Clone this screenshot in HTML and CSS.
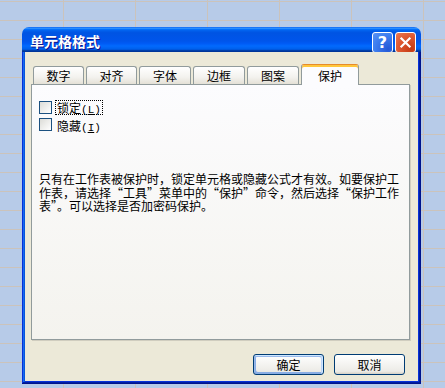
FILE: index.html
```html
<!DOCTYPE html>
<html lang="zh-CN">

<head>
    <meta charset="UTF-8">
    <title>单元格格式</title>
    <link rel="stylesheet" href="styles.css">
</head>

<body>
    <!-- Format Cells dialog -->
    <div class="dialog">
        <div class="titlebar">
            <span class="title">单元格格式</span>
            <div class="caption-buttons">
                <button class="cap help">?</button>
                <button class="cap close">
                    <svg viewBox="0 0 21 21" width="21" height="21">
                        <path d="M6 6 L15 15 M15 6 L6 15" stroke="#fff" stroke-width="2.4" stroke-linecap="square" />
                    </svg>
                </button>
            </div>
        </div>

        <div class="frame">
            <div class="body">
                <!-- Tab strip -->
                <div class="tabs">
                    <div class="tab">数字</div>
                    <div class="tab">对齐</div>
                    <div class="tab wide">字体</div>
                    <div class="tab wide">边框</div>
                    <div class="tab wide">图案</div>
                    <div class="tab selected">保护</div>
                </div>

                <!-- Protection page -->
                <div class="panel">
                    <div class="options">
                        <label class="option">
                            <span class="box"></span>
                            <span class="text focused">锁定<span class="key">(<u>L</u>)</span></span>
                        </label>
                        <label class="option">
                            <span class="box"></span>
                            <span class="text">隐藏<span class="key">(<u>I</u>)</span></span>
                        </label>
                    </div>
                    <p class="note">只有在工作表被保护时，锁定单元格或隐藏公式才有效。如要保护工作表，请选择“工具”菜单中的“保护”命令，然后选择“保护工作表”。可以选择是否加密码保护。</p>
                </div>

                <div class="actions">
                    <button class="btn default">确定</button>
                    <button class="btn">取消</button>
                </div>
            </div>
        </div>
    </div>
</body>

</html>
```

FILE: styles.css
```css
body {
    margin: 0;
    width: 445px;
    height: 388px;
    overflow: hidden;
    padding: 27px 0 0 22px;
    box-sizing: border-box;
    background-color: #b7cbe8;
    background-image:
        linear-gradient(to right, #cbc3bb 1px, transparent 1px),
        linear-gradient(to bottom, #cbc3bb 1px, transparent 1px);
    background-size: 72px 19px;
    background-position: 63px 0, 0 1px;
    font-family: "Noto Sans CJK SC", "DejaVu Sans", sans-serif;
    font-size: 12px;
    color: #000;
}

.dialog {
    width: 399px;
    height: 357px;
    display: flex;
    flex-direction: column;
}

/* Title bar */
.titlebar {
    height: 25px;
    flex: none;
    display: flex;
    align-items: flex-start;
    padding: 0 5px 0 8px;
    border-radius: 7px 7px 0 0;
    background: linear-gradient(to bottom, #0058ee 0%, #3593ff 4%, #288eff 6%, #127dff 8%, #036ffc 10%, #0262ee 14%, #0057e5 20%, #0054e3 24%, #0055eb 56%, #005bf5 66%, #026afe 76%, #0062ef 86%, #0052d6 92%, #0040ab 94%, #003092 100%);
}

.title {
    color: #fff;
    font-weight: bold;
    font-size: 14px;
    line-height: 16px;
    padding-top: 6px;
    text-shadow: 1px 1px #0f1089;
}

.caption-buttons {
    margin-left: auto;
    margin-top: 5px;
    display: flex;
    gap: 2px;
}

.cap {
    width: 21px;
    height: 21px;
    padding: 0;
    border: 1px solid #fff;
    border-radius: 3px;
    display: flex;
    align-items: center;
    justify-content: center;
}

.help {
    background: radial-gradient(circle at 80% 85%, #2458d6, #3f7eef 60%, #5a93f5);
    color: #fff;
    font-family: "DejaVu Sans", sans-serif;
    font-weight: bold;
    font-size: 16px;
    line-height: 1;
}

.close {
    background: radial-gradient(circle at 80% 85%, #c53a14, #df5a33 60%, #ec7b56);
}

.close svg {
    display: block;
}

/* Window frame */
.frame {
    flex: 1;
    background: #0831d9;
    padding: 0 3px 3px;
    box-shadow: inset -1px -1px #00138c, inset 1px 0 #0831d9, inset -2px -2px #001ea0, inset 2px 0 #166aee, inset 3px 0 #0855dd;
    display: flex;
}

.body {
    flex: 1;
    background: #ece9d8;
    padding: 12px 8px 0 6px;
    display: flex;
    flex-direction: column;
}

/* Tabs */
.tabs {
    height: 20px;
    display: flex;
    align-items: flex-end;
    padding-left: 2px;
    gap: 2px;
}

.tab {
    width: 51px;
    height: 18px;
    box-sizing: border-box;
    border: 1px solid #919b9c;
    border-bottom: none;
    border-radius: 3px 3px 0 0;
    background: linear-gradient(to bottom, #fff, #f3f2ee 60%, #e4e1d6);
    text-align: center;
    line-height: 17px;
}

.tab.wide {
    width: 52px;
}

.tab.selected {
    width: 58px;
    height: 21px;
    margin-bottom: -1px;
    position: relative;
    z-index: 1;
    border-top: 1px solid #e68b2c;
    box-shadow: inset 0 2px #ffc73c;
    background: #fcfcfe;
    line-height: 21px;
}

/* Page */
.panel {
    height: 256px;
    box-sizing: border-box;
    border: 1px solid #919b9c;
    box-shadow: 1px 1px #d0cdbf;
    background: linear-gradient(to bottom, #fcfcfe, #f4f3ee);
    padding: 15px 8px 0 7px;
}

.options {
    display: flex;
    flex-direction: column;
    gap: 2px;
}

.option {
    height: 15px;
    display: flex;
    align-items: center;
}

.box {
    width: 13px;
    height: 13px;
    box-sizing: border-box;
    border: 1px solid #1c5180;
    background: linear-gradient(135deg, #dcdcd7, #fff);
    margin-right: 3px;
}

.text {
    height: 15px;
    box-sizing: border-box;
    padding: 0 1px;
    line-height: 15px;
    border: 1px dotted transparent;
}

.text.focused {
    border-color: #000;
    line-height: 13px;
}

.key {
    font-family: "Liberation Mono", monospace;
    font-size: 11px;
}

.note {
    width: 362px;
    margin: 40px 0 0;
    line-height: 13.5px;
}

/* Buttons */
.actions {
    display: flex;
    justify-content: flex-end;
    gap: 10px;
    margin-top: 14px;
    padding-right: 5px;
}

.btn {
    width: 71px;
    height: 21px;
    padding: 0;
    font: inherit;
    color: #000;
    border: 1px solid #003c74;
    border-radius: 3px;
    background: linear-gradient(180deg, #fff, #ecebe6 86%, #d6d0c5);
}

.btn.default {
    box-shadow: inset -1px 1px #cee7ff, inset 1px 2px #98b8ea, inset -2px 2px #bcd4f6, inset 1px -1px #89ade4, inset 2px -2px #89ade4;
}
```
